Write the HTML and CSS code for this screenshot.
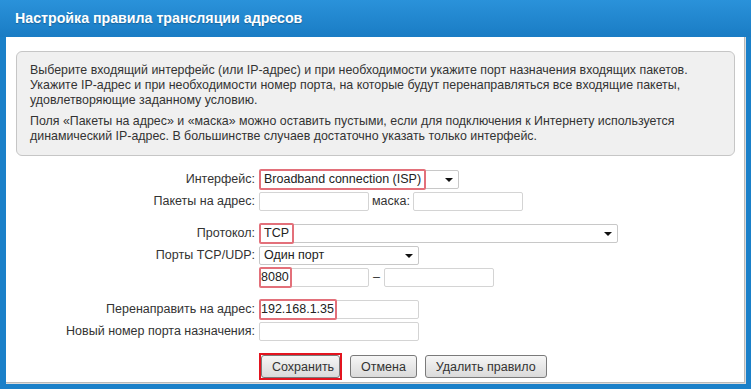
FILE: index.html
```html
<!DOCTYPE html>
<html lang="ru">
<head>
    <meta charset="UTF-8">
    <title>Настройка правила трансляции адресов</title>
    <link rel="stylesheet" href="styles.css">
</head>
<body>
    <div class="window">
        <div class="header">Настройка правила трансляции адресов</div>
        <div class="content">
            <div class="info">
                <p>Выберите входящий интерфейс (или IP-адрес) и при необходимости укажите порт назначения входящих пакетов.<br>
                Укажите IP-адрес и при необходимости номер порта, на которые будут перенаправляться все входящие пакеты,<br>
                удовлетворяющие заданному условию.</p>
                <p>Поля «Пакеты на адрес» и «маска» можно оставить пустыми, если для подключения к Интернету используется<br>
                динамический IP-адрес. В большинстве случаев достаточно указать только интерфейс.</p>
            </div>

            <div class="form">
                <div class="row">
                    <span class="label">Интерфейс:</span>
                    <div class="select w200"><span class="mark">Broadband connection (ISP)</span><span class="arrow"></span></div>
                </div>
                <div class="row">
                    <span class="label">Пакеты на адрес:</span>
                    <div class="input w110"></div>
                    <span class="inline-label">маска:</span>
                    <div class="input w110"></div>
                </div>

                <div class="row group">
                    <span class="label">Протокол:</span>
                    <div class="select w359"><span class="mark">TCP</span><span class="arrow"></span></div>
                </div>
                <div class="row">
                    <span class="label">Порты TCP/UDP:</span>
                    <div class="select w160"><span class="value">Один порт</span><span class="arrow"></span></div>
                </div>
                <div class="row">
                    <span class="label"></span>
                    <div class="input w110"><span class="mark tight">8080</span></div>
                    <span class="dash">–</span>
                    <div class="input w110"></div>
                </div>

                <div class="row group">
                    <span class="label">Перенаправить на адрес:</span>
                    <div class="input w160"><span class="mark tight">192.168.1.35</span></div>
                </div>
                <div class="row">
                    <span class="label">Новый номер порта назначения:</span>
                    <div class="input w160"></div>
                </div>

                <div class="buttons">
                    <span class="save-frame"><button class="btn">Сохранить</button></span>
                    <button class="btn">Отмена</button>
                    <button class="btn">Удалить правило</button>
                </div>
            </div>
        </div>
    </div>
</body>
</html>
```

FILE: styles.css
```css
body {
    margin: 0;
    padding: 0;
    font-family: "Liberation Sans", Arial, sans-serif;
    color: #333;
    background-color: #1a80c9;
}

.window {
    height: 389px;
    display: flex;
    flex-direction: column;
}

.header {
    height: 37px;
    line-height: 37px;
    padding-left: 15px;
    color: #fff;
    font-size: 14.2px;
    font-weight: bold;
    text-shadow: 0 1px 1px rgba(0, 0, 0, 0.25);
    background: linear-gradient(#2a92da, #1a7cc4);
}

.content {
    flex: 1;
    margin: 0 5px 5px 6px;
    background-color: #fff;
    box-shadow: inset -1px -1px 0 #dcdcdc, inset -2px -2px 0 #b9b9b9;
    overflow: hidden;
}

/* description box */
.info {
    margin: 14px 11px 0 10px;
    padding: 11px 13px 11px;
    background-color: #f0f0f0;
    border: 1px solid #c6c6c6;
    border-radius: 6px;
    font-size: 12.4px;
    line-height: 15px;
    white-space: nowrap;
}

.info p {
    margin: 0;
}

.info p + p {
    margin-top: 6px;
}

/* form rows */
.form {
    margin-top: 12px;
    font-size: 12.5px;
}

.row {
    display: flex;
    align-items: center;
    height: 22px;
}

.row.group {
    margin-top: 10px;
}

.label {
    width: 253px;
    padding-right: 4px;
    box-sizing: border-box;
    text-align: right;
    flex-shrink: 0;
}

.inline-label {
    margin: 0 3px;
}

.dash {
    margin: 0 4px 0 4px;
}

.input,
.select {
    position: relative;
    height: 19px;
    box-sizing: border-box;
    border: 1px solid #d4d4d4;
    border-radius: 2px;
    background-color: #fff;
    color: #222;
    display: flex;
    align-items: center;
}

.select {
    border-color: #c8c8c8;
}

.w110 { width: 110px; }
.w160 { width: 160px; }
.w200 { width: 200px; }
.w359 { width: 359px; }

.value {
    padding-left: 4px;
}

.mark {
    align-self: stretch;
    display: flex;
    align-items: center;
    margin: -2px 0 -2px -1px;
    padding: 0 3px;
    border: 2px solid #e3707a;
    border-radius: 2px;
}

.mark.tight {
    padding: 0 1px 0 0;
}

.arrow {
    position: absolute;
    right: 5px;
    top: 7px;
    border-left: 4px solid transparent;
    border-right: 4px solid transparent;
    border-top: 4px solid #111;
}

/* buttons */
.buttons {
    display: flex;
    align-items: center;
    margin: 11px 0 0 253px;
}

.btn {
    height: 23px;
    padding: 0 10px;
    font-family: "Liberation Sans", Arial, sans-serif;
    font-size: 12.5px;
    color: #333;
    border: 1px solid #7a7a7a;
    border-radius: 3px;
    background: linear-gradient(#f6f6f6, #dadada);
    margin-right: 8px;
}

.save-frame {
    display: flex;
    border: 2px solid #e3141f;
    margin-right: 8px;
}

.save-frame .btn {
    width: 79px;
    margin: 0;
}
```
